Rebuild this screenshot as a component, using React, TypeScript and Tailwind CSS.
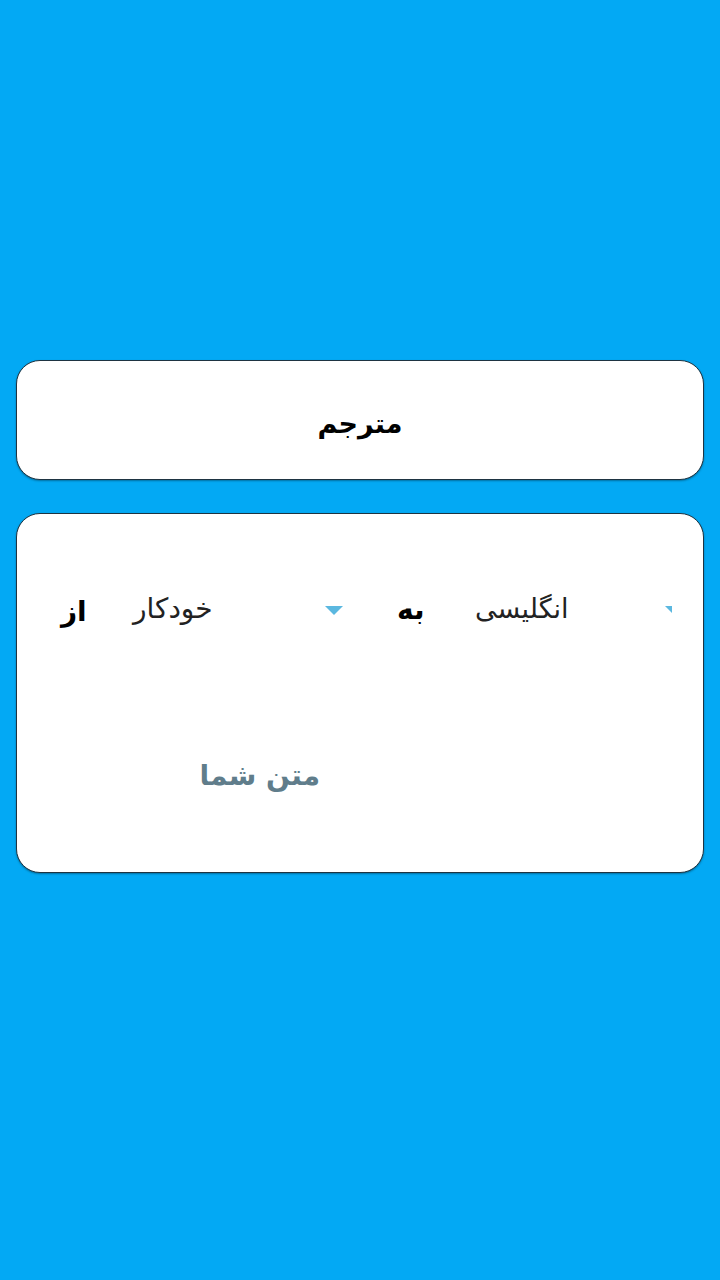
import React from "react";

const Caret = ({ clip }: { clip?: boolean }) => (
  <div className={clip ? "w-[7px] overflow-hidden" : "w-[18px]"}>
    <svg width="18" height="9" viewBox="0 0 18 9" className="block">
      <polygon points="0,0 18,0 9,9" fill="#5bb8e0" />
    </svg>
  </div>
);

const App: React.FC = () => {
  return (
    <div
      className="w-[720px] h-[1280px] bg-[#03a9f4] pt-[360px] px-4 flex flex-col gap-[33px]"
      style={{ fontFamily: '"DejaVu Sans", sans-serif' }}
    >
      <div className="h-[120px] bg-white rounded-[24px] border border-[#1e3442] shadow-[0_1px_2px_rgba(0,0,0,0.35)] flex items-center justify-center pt-[6px]">
        <span className="text-[27px] font-bold text-black leading-none">مترجم</span>
      </div>

      <div className="h-[360px] bg-white rounded-[24px] border border-[#1e3442] shadow-[0_1px_2px_rgba(0,0,0,0.35)] flex flex-col">
        <div className="mt-[67px] h-[56px] flex items-center">
          <div className="w-[103px] pl-[44px] pt-[6px]">
            <span className="text-[28px] font-bold text-black">از</span>
          </div>
          <div className="w-[230px] pl-[13px] pr-[7px] flex items-center">
            <span className="text-[28px] text-[#222]">خودکار</span>
            <div className="ml-auto mt-[2px]">
              <Caret />
            </div>
          </div>
          <div className="w-[110px] pl-[47px] pt-[2px]">
            <span className="text-[28px] font-bold text-black">به</span>
          </div>
          <div className="w-[212px] pl-[15px] flex items-center">
            <span className="text-[27px] text-[#222]">انگلیسی</span>
            <div className="ml-auto mt-[2px]">
              <Caret clip />
            </div>
          </div>
        </div>
        <div className="mt-[118px] w-[303px] text-right">
          <span className="text-[28px] font-bold text-[#607d8b]">متن شما</span>
        </div>
      </div>
    </div>
  );
};

export default App;
